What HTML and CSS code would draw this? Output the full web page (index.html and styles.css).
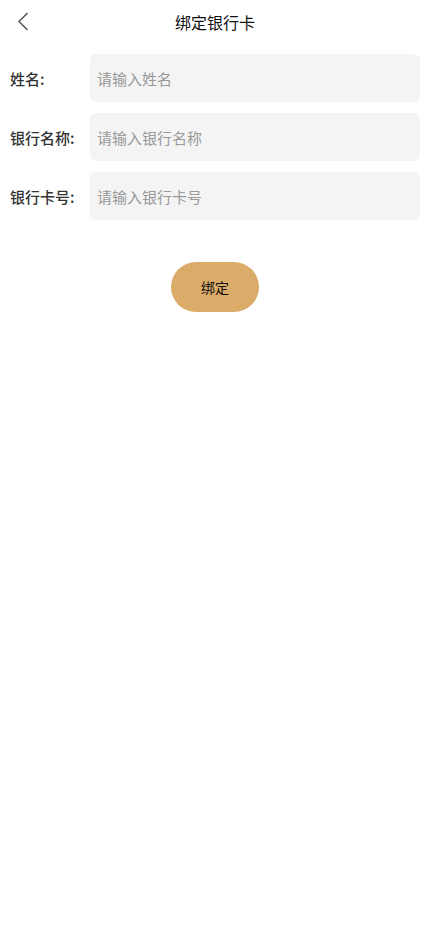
FILE: index.html
```html
<!DOCTYPE html>
<html lang="zh">
<head>
<meta charset="utf-8">
<meta name="viewport" content="width=device-width, initial-scale=1">
<title>绑定银行卡</title>
<link rel="stylesheet" href="styles.css">
</head>
<body>
<header class="nav">
  <span class="back">
    <svg width="12" height="19" viewBox="0 0 12 19"><path d="M10.5 1 L2 9.5 L10.5 18" fill="none" stroke="#555" stroke-width="1.5"/></svg>
  </span>
  <h1 class="title">绑定银行卡</h1>
</header>
<main class="form">
  <div class="row">
    <label class="label">姓名:</label>
    <div class="field">请输入姓名</div>
  </div>
  <div class="row">
    <label class="label">银行名称:</label>
    <div class="field">请输入银行名称</div>
  </div>
  <div class="row">
    <label class="label">银行卡号:</label>
    <div class="field">请输入银行卡号</div>
  </div>
  <div class="actions">
    <button class="btn">绑定</button>
  </div>
</main>
</body>
</html>
```
FILE: styles.css
```css
* { box-sizing: border-box; }
html, body { margin: 0; padding: 0; background: #fff; }
body {
  font-family: "Noto Sans CJK SC", "Noto Sans", sans-serif;
  color: #333;
  width: 430px;
}
.nav {
  position: relative;
  height: 44px;
  display: flex;
  align-items: center;
  justify-content: center;
}
.back {
  position: absolute;
  left: 17px;
  top: 12px;
  width: 12px;
  height: 19px;
  display: flex;
}
.title {
  margin: 0;
  font-size: 16px;
  font-weight: 400;
  color: #111;
  line-height: 1;
}
.form {
  padding: 10px 10px 0 10px;
  display: flex;
  flex-direction: column;
  gap: 11px;
}
.row {
  display: flex;
  align-items: center;
  height: 48px;
}
.label {
  width: 80px;
  flex: none;
  font-size: 15px;
  color: #333;
  font-weight: 500;
}
.field {
  flex: 1;
  height: 48px;
  background: #f4f4f4;
  border-radius: 6px;
  display: flex;
  align-items: center;
  padding-left: 7px;
  font-size: 15px;
  color: #999;
}
.actions {
  display: flex;
  justify-content: center;
  margin-top: 31px;
}
.btn {
  width: 88px;
  height: 50px;
  border: none;
  border-radius: 25px;
  background: #dbab69;
  color: #111;
  font-family: "Noto Sans CJK SC", sans-serif;
  font-size: 14px;
  padding: 0;
}
```
